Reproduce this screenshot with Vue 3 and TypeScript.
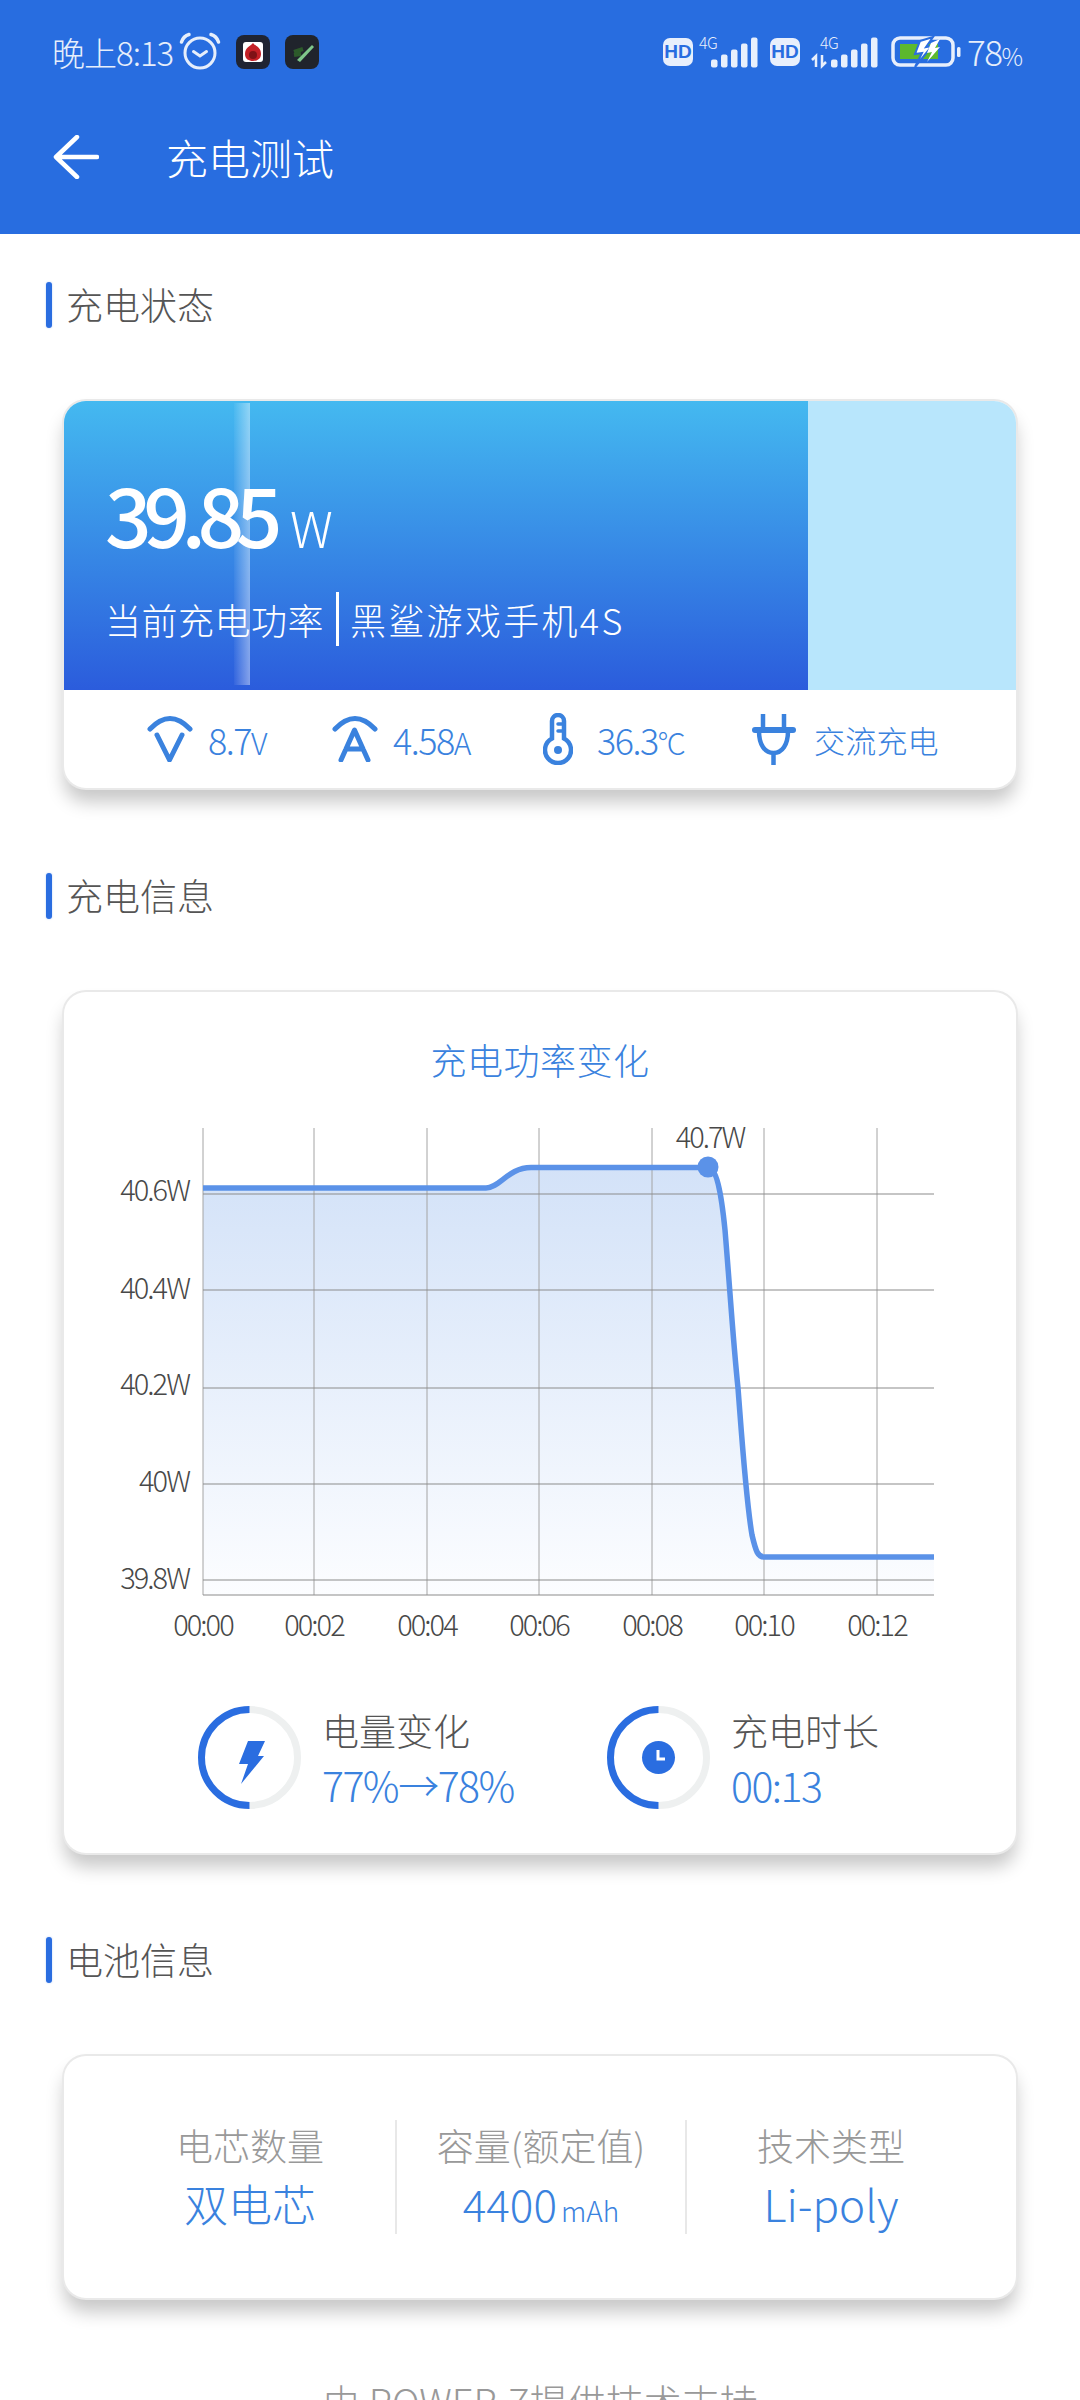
<template>
  <div class="page">
    <header class="app-header">
      <div class="status-bar">
        <div class="status-left">
          <span class="clock">晚上8:13</span>
          <svg class="alarm" width="42" height="38" viewBox="0 0 42 38" fill="none" stroke="#e6eefb" stroke-linecap="round">
            <circle cx="21" cy="21" r="15" stroke-width="3" />
            <path d="M14.5 19.5 L21 24 L27.5 19.5" stroke-width="3" />
            <path d="M2.5 10 Q4.5 4 10 2.5 M39.500 10 Q37.500 4 32 2.500" stroke-width="3.5" />
          </svg>
          <svg class="app-icon" width="34" height="34" viewBox="0 0 34 34">
            <rect width="34" height="34" rx="8" fill="#1f2432" />
            <rect x="7" y="7" width="20" height="20" rx="3" fill="#fff" />
            <path d="M17 8 C19 11 25 12 25 19 C25 24 21 26 17 26 C13 26 9 24 9 19 C9 12 15 11 17 8 Z" fill="#c32026" />
            <circle cx="17" cy="20" r="4" fill="#7d1216" />
          </svg>
          <svg class="app-icon" width="34" height="34" viewBox="0 0 34 34">
            <rect width="34" height="34" rx="8" fill="#20242c" />
            <path d="M9 17 L18 14 M9 20 L16 19" stroke="#2c5a2a" stroke-width="4" />
            <path d="M12 25 L27 10 L29 12 L15 27 Z" fill="#7fc78a" />
          </svg>
        </div>
        <div class="status-right">
          <span class="hd">HD</span>
          <svg class="signal" width="60" height="46" viewBox="0 0 60 46">
            <text x="0" y="20" class="net">4G</text>
            <rect v-for="b in signalBars" :key="b.x" :x="b.x + 12" :y="38.500 - b.h" width="6.500" :height="b.h" rx="2" fill="#e8effc" />
          </svg>
          <span class="hd hd-second">HD</span>
          <svg class="signal signal-second" width="70" height="46" viewBox="0 0 70 46">
            <text x="10" y="20" class="net">4G</text>
            <path d="M6 38 V27 L2 31 M12 26 V37 L16 33" stroke="#e8effc" stroke-width="2.500" fill="none" />
            <rect v-for="b in signalBars" :key="b.x" :x="b.x + 21" :y="38.500 - b.h" width="6.500" :height="b.h" rx="2" fill="#e8effc" />
          </svg>
          <svg class="battery" width="70" height="32" viewBox="0 0 70 32">
            <rect x="2" y="2" width="60" height="27" rx="7" fill="none" stroke="#e8effc" stroke-width="3.500" />
            <rect x="9" y="8" width="38" height="15" fill="#5cb82e" />
            <rect x="66" y="11" width="3.500" height="10" rx="1.500" fill="#e8effc" />
            <path d="M29 5 L42 1 L35 11 L41 10 L24 31 L31 17 L24 18 Z" fill="#fff" stroke="#2a6de0" stroke-width="2" />
            <path d="M40 7 L49 3 L44 12 L49 11 L36 26 L41 16 L36 17 Z" fill="#fff" />
          </svg>
          <span class="level">78<small>%</small></span>
        </div>
      </div>
      <div class="toolbar">
        <svg class="back" width="46" height="44" viewBox="0 0 46 44" fill="none" stroke="#fff" stroke-width="4.500" stroke-linecap="round" stroke-linejoin="round">
          <path d="M44 22 H3 M24 2 L3 22 L24 42" />
        </svg>
        <h1 class="page-title">充电测试</h1>
      </div>
    </header>

    <main class="content">
      <h2 class="section-title">充电状态</h2>
      <section class="card status-card">
        <div class="hero">
          <div class="hero-fill">
            <div class="gleam"></div>
            <div class="power"><span class="power-num">39.85</span><span class="power-unit">W</span></div>
            <div class="hero-sub">
              <span>当前充电功率</span>
              <i class="hero-divider"></i>
              <span class="device">黑鲨游戏手机4S</span>
            </div>
          </div>
        </div>
        <div class="metrics">
          <div class="metric m-volt">
            <svg width="46" height="46" viewBox="0 0 46 46" fill="none" stroke="#3a82de" stroke-width="5" stroke-linecap="round" stroke-linejoin="round">
              <path d="M3 13 Q23 -8 43 13 M10 19 L22.500 44 L35 19" />
            </svg>
            <span class="metric-text">8.7<small>V</small></span>
          </div>
          <div class="metric m-amp">
            <svg width="46" height="46" viewBox="0 0 46 46" fill="none" stroke="#3a82de" stroke-width="5" stroke-linecap="round" stroke-linejoin="round">
              <path d="M3 13 Q23 -8 43 13 M9 44 L22.500 14 L36 44 M14 33 H31" />
            </svg>
            <span class="metric-text">4.58<small>A</small></span>
          </div>
          <div class="metric m-temp">
            <svg width="30" height="52" viewBox="0 0 30 52" fill="none" stroke="#3a82de" stroke-width="4.500" stroke-linecap="round">
              <path d="M9 25.500 V8 a6 6 0 0 1 12 0 V25.500 A13 13 0 1 1 9 25.500 Z" />
              <path d="M15 11 H21 M15 18 H21" stroke-width="3.500" />
              <circle cx="15" cy="37" r="4" fill="#3a82de" stroke="none" />
            </svg>
            <span class="metric-text">36.3<small>°C</small></span>
          </div>
          <div class="metric m-plug">
            <svg width="44" height="52" viewBox="0 0 44 52" fill="none" stroke="#3a82de" stroke-width="4.500" stroke-linecap="round">
              <path d="M11 1 V15 M32 1 V15" stroke-linecap="butt" />
              <path d="M3 17 H41" stroke-width="6" />
              <path d="M7 18 C7 32 13 40 21.500 40 C30 40 36 32 36 18 M21.500 40 V52" />
            </svg>
            <span class="metric-text zh">交流充电</span>
          </div>
        </div>
      </section>

      <h2 class="section-title">充电信息</h2>
      <section class="card info-card">
        <div class="chart-title">充电功率变化</div>
        <svg class="chart" width="850" height="540" viewBox="100 1110 850 540">
          <defs>
            <linearGradient id="areaFill" x1="0" y1="0" x2="0" y2="1">
              <stop offset="0" stop-color="#d3e2f8" />
              <stop offset="1" stop-color="#fcfdff" />
            </linearGradient>
          </defs>
          <path :d="curve + ' L934 1595 L203 1595 Z'" fill="url(#areaFill)" />
          <line v-for="x in gridX" :key="x" :x1="x" y1="1128" :x2="x" y2="1595" stroke="#a4a4a4" stroke-width="1" />
          <line v-for="t in yTicks" :key="t.label" x1="203" :y1="t.y" x2="934" :y2="t.y" stroke="#8c8c8c" stroke-width="1.200" />
          <line x1="203" y1="1595" x2="934" y2="1595" stroke="#8c8c8c" stroke-width="1.200" />
          <path :d="curve" fill="none" stroke="#5b92e8" stroke-width="5.500" />
          <circle cx="708" cy="1167" r="10.500" fill="#5b92e8" />
          <text x="710" y="1148" class="tick" text-anchor="middle">40.7W</text>
          <text v-for="t in yTicks" :key="t.label" x="189" :y="t.ly" class="tick" text-anchor="end">{{ t.label }}</text>
          <text v-for="(x, i) in gridX" :key="x" :x="x" y="1636" class="tick" text-anchor="middle">{{ xLabels[i] }}</text>
        </svg>
        <div class="summary">
          <div class="summary-item">
            <svg width="103" height="103" viewBox="0 0 103 103" fill="none">
              <path d="M51.500 3.500 A48 48 0 0 1 51.500 99.500" stroke="#eef0f0" stroke-width="7" />
              <path d="M51.500 3.500 A48 48 0 0 0 51.500 99.500" stroke="#2a6de0" stroke-width="7" />
              <path d="M50 35 L67 35 L60 50 L66 50 L43 78 L50 58 L41 58 Z" fill="#2a6de0" />
            </svg>
            <div class="summary-text">
              <div class="summary-label">电量变化</div>
              <div class="summary-value">77%→78%</div>
            </div>
          </div>
          <div class="summary-item">
            <svg width="103" height="103" viewBox="0 0 103 103" fill="none">
              <path d="M51.500 3.500 A48 48 0 0 1 51.500 99.500" stroke="#eef0f0" stroke-width="7" />
              <path d="M51.500 3.500 A48 48 0 0 0 51.500 99.500" stroke="#2a6de0" stroke-width="7" />
              <circle cx="51.500" cy="51.500" r="16.500" fill="#2a6de0" />
              <path d="M51 44 V53 H58" stroke="#fff" stroke-width="3" />
            </svg>
            <div class="summary-text">
              <div class="summary-label">充电时长</div>
              <div class="summary-value">00:13</div>
            </div>
          </div>
        </div>
      </section>

      <h2 class="section-title">电池信息</h2>
      <section class="card battery-card">
        <div v-for="cell in batteryInfo" :key="cell.label" class="battery-col">
          <div class="battery-label">{{ cell.label }}</div>
          <div class="battery-value">{{ cell.value }}<small v-if="cell.unit">{{ cell.unit }}</small></div>
        </div>
      </section>

      <footer class="credit">由 POWER-Z提供技术支持</footer>
    </main>
  </div>
</template>

<script setup lang="ts">
const signalBars = [
  { x: 0, h: 8 },
  { x: 10, h: 13 },
  { x: 20, h: 18 },
  { x: 30, h: 24 },
  { x: 40, h: 30 },
];

const gridX = [203, 314, 427, 539, 652, 764, 877];
const xLabels = ["00:00", "00:02", "00:04", "00:06", "00:08", "00:10", "00:12"];

const yTicks = [
  { label: "40.6W", y: 1194, ly: 1201 },
  { label: "40.4W", y: 1290, ly: 1299 },
  { label: "40.2W", y: 1388, ly: 1395 },
  { label: "40W", y: 1484, ly: 1492 },
  { label: "39.8W", y: 1580, ly: 1589 },
];

const curve =
  "M203 1188 L486 1188 C500 1188 508 1167.5 531 1167.5 L708 1167.5 " +
  "C716 1167.5 721 1190 725 1230 C730 1290 733 1340 738 1388 " +
  "C742 1440 746 1500 752 1535 C756 1552 758 1557 764 1557 L934 1557";

const batteryInfo = [
  { label: "电芯数量", value: "双电芯", unit: "" },
  { label: "容量(额定值)", value: "4400", unit: "mAh" },
  { label: "技术类型", value: "Li-poly", unit: "" },
];
</script>

<style>
html,
body {
  margin: 0;
  background: #fff;
}
</style>

<style scoped>
.page {
  width: 1080px;
  height: 2400px;
  overflow: hidden;
  background: #fff;
  font-family: "Noto Sans CJK SC", "Noto Sans", sans-serif;
  font-weight: 300;
}

.app-header {
  height: 234px;
  background: #286de0;
  color: #fff;
}

.status-bar {
  height: 104px;
  display: flex;
  justify-content: space-between;
  align-items: center;
  padding: 0 59px 0 52px;
  color: #e6eefb;
}

.status-left,
.status-right {
  display: flex;
  align-items: center;
}

.clock {
  font-size: 33px;
  letter-spacing: -1px;
}

.alarm {
  margin: -2px 0 0 6px;
}

.app-icon {
  margin-left: 15px;
}

.hd {
  width: 30px;
  height: 28px;
  border-radius: 7px;
  background: #e8effc;
  color: #286de0;
  font-family: "Liberation Sans", sans-serif;
  font-size: 19px;
  font-weight: 700;
  line-height: 28px;
  text-align: center;
}

.hd-second {
  margin-left: 11px;
}

.signal {
  margin-left: 6px;
}

.signal-second {
  margin-left: 10px;
}

.net {
  font-size: 16px;
  letter-spacing: -0.5px;
  fill: #e8effc;
}

.battery {
  margin-left: 11px;
}

.level {
  width: 54px;
  margin: -3px 0 0 6px;
  font-size: 35px;
  letter-spacing: -1.5px;
  white-space: nowrap;
}

.level small {
  font-size: 24px;
}

.toolbar {
  height: 106px;
  display: flex;
  align-items: center;
  padding-left: 53px;
  gap: 67px;
}

.page-title {
  margin: 0;
  font-size: 42px;
  font-weight: 300;
  line-height: 1;
}

.content {
  padding: 48px 64px 0;
}

.section-title {
  position: relative;
  margin: 0 0 73px -18px;
  padding-left: 20px;
  height: 46px;
  font-size: 37px;
  font-weight: 300;
  line-height: 44px;
  color: #555;
}

.section-title::before {
  content: "";
  position: absolute;
  left: 0;
  top: 0;
  bottom: 0;
  width: 6px;
  border-radius: 3px;
  background: #2a6de0;
  box-shadow: 0 0 2px rgba(42, 109, 224, 0.35);
}

.card {
  background: #fff;
  border-radius: 22px;
  box-shadow:
    0 0 0 2px #e9e9e9,
    0 14px 18px rgba(0, 0, 0, 0.22);
  margin-bottom: 85px;
}

.status-card {
  height: 387px;
  overflow: hidden;
}

.hero {
  height: 289px;
  background: #b8e6fc;
}

.hero-fill {
  position: relative;
  width: 744px;
  height: 100%;
  box-sizing: border-box;
  padding: 66px 0 0 41px;
  background: linear-gradient(180deg, #44b9f0 0%, #2b5cdc 100%);
  color: #fff;
}

.gleam {
  position: absolute;
  left: 170px;
  top: 2px;
  bottom: 5px;
  width: 16px;
  background: linear-gradient(90deg, rgba(255, 255, 255, 0.04), rgba(255, 255, 255, 0.42));
}

.power {
  height: 92px;
  display: flex;
  align-items: baseline;
}

.power-num {
  position: relative;
  font-size: 82px;
  font-weight: 500;
  line-height: 92px;
  letter-spacing: -8.500px;
}

.power-unit {
  font-size: 50px;
  margin-left: 16px;
}

.hero-sub {
  position: relative;
  display: flex;
  align-items: center;
  height: 54px;
  margin-top: 33px;
  font-size: 36px;
  letter-spacing: 0.5px;
}

.device {
  letter-spacing: 2.300px;
}

.hero-divider {
  width: 3px;
  height: 54px;
  background: #fff;
  margin: 0 11px 0 12px;
}

.metrics {
  position: relative;
  height: 98px;
  display: flex;
  align-items: center;
  padding-left: 83px;
  color: #3a82de;
}

.metric {
  display: flex;
  align-items: center;
}

.m-volt { width: 185px; gap: 15px; }
.m-amp { width: 211px; gap: 15px; }
.m-temp { width: 209px; gap: 24px; }
.m-plug { gap: 18px; }

.metric-text {
  font-size: 36px;
  letter-spacing: -1.5px;
}

.metric-text.zh {
  font-size: 31px;
  letter-spacing: 0.2px;
}

.metric-text small {
  font-size: 30px;
}

.info-card {
  height: 861px;
  box-sizing: border-box;
  padding-top: 44px;
  margin-bottom: 84px;
}

.chart-title {
  text-align: center;
  height: 46px;
  line-height: 46px;
  font-size: 36px;
  letter-spacing: 0.5px;
  color: #3a82de;
}

.chart {
  display: block;
  margin: 28px 0 0 36px;
}

.tick {
  font-size: 29px;
  letter-spacing: -2px;
  fill: #484848;
}

.summary {
  display: flex;
  margin: 53px 0 0 134px;
}

.summary-item {
  width: 410px;
  display: flex;
  align-items: center;
  gap: 21px;
}

.summary-label {
  font-size: 37px;
  line-height: 54px;
  color: #555;
}

.summary-value {
  font-size: 41px;
  line-height: 54px;
  letter-spacing: -1.5px;
  color: #3a82de;
}

.battery-card {
  height: 242px;
  box-sizing: border-box;
  padding: 64px 41px 0;
  display: grid;
  grid-template-columns: repeat(3, 290px);
  align-items: start;
  margin-bottom: 0;
}

.battery-col {
  height: 114px;
  text-align: center;
}

.battery-col + .battery-col {
  border-left: 2px solid #e8e8e8;
}

.battery-label {
  font-size: 37px;
  line-height: 50px;
  color: #999;
}

.battery-value {
  font-size: 44px;
  line-height: 66px;
  color: #3a82de;
}

.battery-value small {
  font-size: 28px;
  margin-left: 4px;
}

.credit {
  margin-top: 78px;
  text-align: center;
  font-size: 38px;
  line-height: 50px;
  color: #999;
}
</style>
